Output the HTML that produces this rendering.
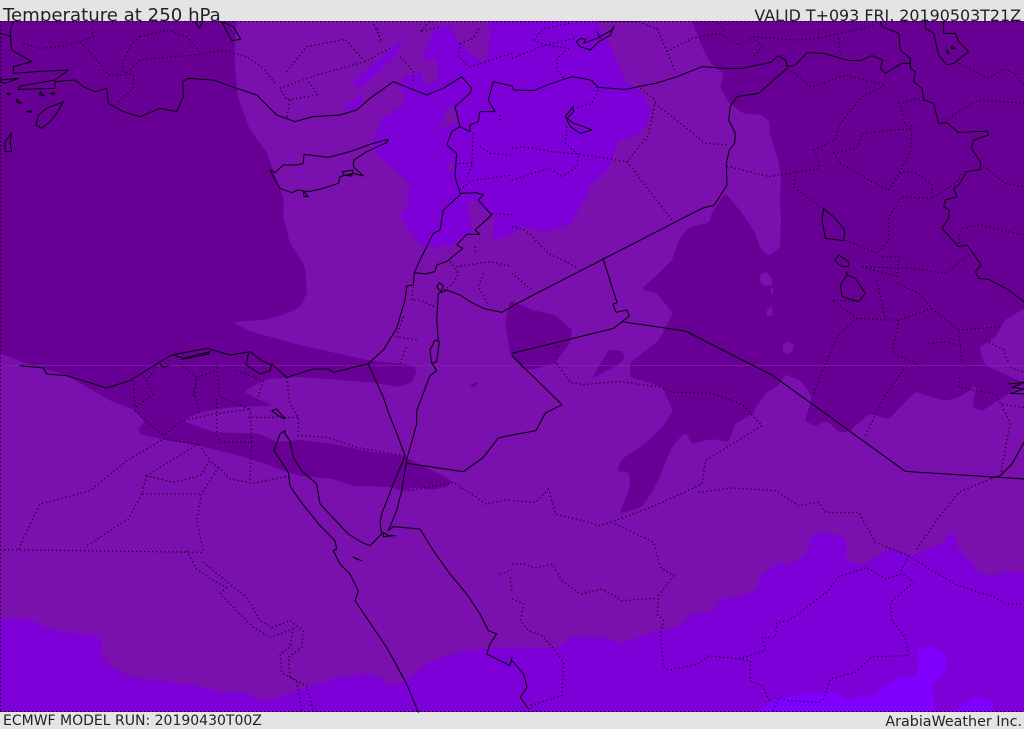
<!DOCTYPE html>
<html><head><meta charset="utf-8"><title>Temperature at 250 hPa</title>
<style>
html,body{margin:0;padding:0;background:#e4e4e4;width:1024px;height:729px;overflow:hidden}
svg{position:absolute;left:0;top:0;display:block}
text{font-family:"DejaVu Sans","Liberation Sans",sans-serif;fill:#222}
.l path{fill:none;stroke:#000;stroke-width:1;stroke-linejoin:round;stroke-linecap:round;vector-effect:non-scaling-stroke}
.d path{fill:none;stroke:#000;stroke-width:1.1;stroke-dasharray:1.2 2.8;vector-effect:non-scaling-stroke}
.s{filter:url(#sm)}
</style></head><body>
<svg width="1024" height="729" viewBox="0 0 1024 729" xmlns="http://www.w3.org/2000/svg">
<defs>
<clipPath id="map"><rect y="21" width="1024" height="691"/></clipPath>
<filter id="sm" filterUnits="userSpaceOnUse" x="-30" y="-10" width="1090" height="760" color-interpolation-filters="sRGB">
<feGaussianBlur stdDeviation="1.8"/>
<feComponentTransfer><feFuncA type="linear" slope="6" intercept="-2.5"/></feComponentTransfer>
</filter>
</defs>
<rect width="1024" height="729" fill="#e4e4e4"/>
<text x="3" y="21" font-size="18.15">Temperature at 250 hPa</text>
<text x="1021" y="21" font-size="15.9" text-anchor="end">VALID T+093 FRI. 20190503T21Z</text>
<rect y="21" width="1024" height="691" fill="#7a10ae"/>
<g clip-path="url(#map)">
<!-- bright -->
<path class="s" fill="#7d00d9" d="M422 60 433 30 448 25 460 43 482 63 488 57 490 33 487 11 592 11 609 43 619 67 627 83 640 90 650 107 649 123 635 137 619 140 609 168 589 187 587 197 579 208 572 223 545 232 522 227 512 235 492 240 495 217 490 213 480 207 473 197 468 207 473 233 457 243 433 248 420 245 400 217 407 207 410 183 377 155 373 140 383 117 402 107 405 98 400 87 403 77 422 72 422 80 428 87 438 80 437 58Z"/>
<path fill="#7a10ae" d="M440 128 447 107 455 105 460 120 447 127Z"/>
<path fill="#7a10ae" d="M447 168 450 161 453 163 452 170 448 173Z"/>
<path fill="#7d00d9" d="M353 82 403 38 398 53 360 90Z M343 108 362 93 363 100 357 108 347 112Z"/>
<path class="s" fill="#7d00d9" d="M-10 619 27 619 57 631 98 636 103 644 100 654 113 669 133 677 200 686 217 692 247 692 263 701 280 697 307 687 333 679 367 673 377 676 390 685 403 682 427 664 450 654 480 649 512 647 559 648 572 637 599 637 622 643 635 639 652 632 672 629 685 622 692 613 712 613 722 599 742 597 759 587 760 576 777 563 792 564 807 554 810 537 822 532 845 536 847 547 845 557 855 565 865 564 889 549 904 552 912 556 945 542 949 532 957 536 957 547 979 572 992 576 1005 571 1034 572 1034 722 -10 722Z"/>
<path class="s" fill="#7f00ff" d="M745 722 775 699 805 694 832 691 845 697 850 703 855 697 872 696 899 677 915 676 920 664 917 651 932 646 947 657 945 671 932 686 935 722Z M938 722 964 704 975 696 992 701 996 722Z"/>
<!-- dark -->
<path class="s" fill="#680096" d="M-10 11 237 11 235 43 235 67 238 97 250 130 267 153 277 180 284 200 283 217 290 243 305 267 307 293 300 307 283 315 263 320 230 322 253 332 300 345 367 360 412 365 417 371 412 382 400 387 367 382 300 377 267 379 243 391 257 399 277 406 233 407 200 412 182 421 200 427 213 432 260 434 277 442 300 440 333 444 367 451 403 456 433 471 453 481 447 487 430 490 417 487 403 491 390 487 353 486 333 479 300 476 287 472 267 464 233 454 200 446 167 440 140 434 138 429 145 422 133 409 113 402 87 387 63 374 30 365 10 357 -10 349Z"/>
<path class="s" fill="#680096" d="M688 11 702 47 712 65 724 73 720 87 729 103 742 113 762 115 770 122 769 133 773 143 779 163 781 177 780 200 781 217 780 247 769 256 760 248 755 233 742 213 729 197 725 193 712 213 709 223 689 227 679 240 672 260 655 277 640 290 655 292 673 313 659 340 630 363 630 377 662 387 673 411 665 424 645 444 622 459 616 472 629 472 630 487 619 514 642 507 655 487 672 447 685 432 692 444 712 439 729 442 735 424 752 414 765 394 780 384 785 374 802 382 812 397 805 421 815 426 827 421 839 432 849 432 869 414 889 419 915 392 932 397 945 401 962 396 977 384 972 407 982 411 1019 387 1034 381 1019 381 989 367 984 363 979 347 995 338 1005 320 1034 303 1034 11Z"/>
<path fill="#7a10ae" d="M760 275 766 272 772 278 772 285 765 286 760 282Z M771 288 773 288 773 294 771 294Z M767 310 772 306 773 315 767 316Z M783 345 788 341 794 345 792 352 786 354 783 351Z"/>
<path class="s" fill="#680096" d="M510 300 532 310 555 315 572 330 570 343 555 363 537 369 522 369 510 353 505 323Z"/>
<path fill="#680096" d="M592 379 599 366 609 350 622 351 625 358 619 364 595 377Z M470 385 478 382 477 386 472 387Z"/>
</g>
<rect y="365" width="1024" height="1" fill="#8a2cb0" opacity=".55"/>
<g class="d"><path d="M0 21.5H1024M0 711.5H1024M.5 21V712"/></g>

<!-- Q1 -->
<g transform="scale(.33333)">
<g class="d"><path d="M70 130 120 145 180 140 240 125 280 110 275 80M240 125 290 180 325 225 375 225 420 180 520 170 590 165 670 150 740 170 790 205 825 250M420 110 500 90 560 110 600 155M420 110 395 130 365 195 370 215 400 225 400 265 350 310M860 215 920 140 1035 118 1095 185 1170 145M1095 185 950 225 840 265 860 300 950 285M925 245 955 285M870 300 860 355M1290 65 1260 95 1320 80M1130 85 1145 125 1120 70M1200 170 1240 215 1240 250M1380 130 1420 115 1440 80M1380 130 1375 170 1410 200 1536 160M1420 400 1415 500 1400 530M1440 440 1470 460 1536 465M1365 490 1420 490M1380 570 1410 545 1430 540 1536 525M1475 640 1536 645M1425 740 1425 760M1350 785 1375 820 1360 850 1320 880M1370 800 1470 785 1536 800M1450 820 1435 860 1465 915M1240 860 1235 900 1260 900 1315 925M1210 950 1190 1010 1250 1020M1200 1090 1220 1040M1500 345 1500 360"/></g>
<g class="l"><path d="M40 65 30 95 35 150 70 170 95 185 40 200 40 220 110 215 205 210 165 240 60 258 55 268 165 265 165 245 225 240 250 260 285 275 320 265 325 310 370 335 420 350 480 325 530 335 550 290 548 245 565 235 640 240 710 265 770 285 830 345 885 365 940 350 1020 345 1070 330 1110 295 1180 245 1280 285 1330 265 1385 230 1415 265 1410 280 1365 320 1380 380 1410 395 1410 375 1435 365 1440 335 1485 335 1465 300 1480 245 1536 258"/>
<path d="M1380 380 1355 395 1340 435 1370 460 1365 530 1380 580 1430 578 1450 585 1435 600 1475 645 1425 690 1440 703 1400 703 1370 735 1388 745 1340 785 1310 795 1305 815 1275 822 1243 818 1240 855 1220 858 1215 900 1190 985 1150 1050 1100 1095"/>
<path d="M1380 585 1330 630 1320 690 1300 700 1260 780 1243 818"/>
<path d="M1315 880 1340 870 1380 885 1410 905 1450 925 1505 937 1536 920M1315 880 1310 960 1315 1020M1310 860 1318 848 1330 858 1322 875 1310 860M1290 1050 1305 1020 1318 1025 1310 1085 1295 1090 1290 1050"/>
<path d="M810 510 825 518 850 495 890 495 910 490 912 463 985 472 1050 455 1120 430 1165 418 1160 428 1100 455 1062 480 1060 500 1090 528 1060 520 1020 530 1015 550 970 565 925 575 895 570 875 578 840 565 825 540 810 510M910 572 925 590 912 590 910 572M1028 515 1060 510 1055 528 1030 525 1028 515"/>
<path d="M190 305 140 325 115 345 108 375 125 385 150 365 170 340 190 305ZM35 398 15 425 15 455 35 455 30 425 35 398ZM20 280 32 280 28 285 20 280ZM50 298 65 310 48 306ZM80 335 95 333 92 338 80 335ZM120 275 135 288 120 285ZM150 280 165 278 160 284ZM0 240 55 235 15 250 0 245M0 100 30 108M665 65 695 122 722 118 700 80 665 65M585 65 598 85 608 65"/>
<path d="M465 1095 515 1065 620 1045 690 1065 750 1055 790 1085 815 1095M520 1065 550 1075 630 1055 625 1062 545 1078M745 1060 740 1090"/></g>
</g>

<!-- Q2 -->
<g transform="translate(512,0) scale(.33333)">
<g class="d"><path d="M0 175 100 135 190 115M65 120 95 85 175 70M65 120 100 135 170 145M170 145 135 175 135 210 160 240M240 240 258 270 240 310 190 325M165 380 160 430 200 465 195 500 150 530M0 540 110 505 150 530M0 445 30 440 120 455 200 462 345 485 410 405 430 300 385 265M430 310 580 430 650 435M345 485 480 660M645 498 770 530 925 505M850 515 845 560 910 610 935 625M905 450 970 420 985 370 1050 290 1120 255 1000 225 900 262 830 205M905 450 920 480 920 505M965 460 1040 440 1050 400 1200 385 1195 460 1130 570 1070 540 985 490 965 460M1160 310 1230 295M1165 320 1180 375 1220 380M1130 570 1170 515 1215 520 1260 555 1260 595 1330 550 1360 510M1405 490 1480 550 1536 560M1260 595 1170 590 1130 650 1130 720 1095 760 1000 720M1350 685 1400 675 1536 705M1340 730 1345 690M1370 765 1300 820 1200 805 1050 800M1110 770 1160 770 1155 830 1050 800M1155 850 1220 880 1260 925 1340 990 1350 1090M1340 990 1470 980M1260 925 1160 960 1120 960 1095 840M1120 960 1035 955 960 900 1040 905M1035 955 975 1010 940 1095M1160 960 1140 1060 1225 1095M1250 1030 1300 1025 1350 1040M1420 1020 1475 1050 1490 1090M465 155 540 115 620 100 680 135 725 110 850 120 920 115 1090 75M920 115 920 85M435 85 465 155 490 215M725 110 750 140 720 175M980 115 985 170M260 65 380 65 440 90M620 70 640 95M1310 355 1400 300 1536 310M0 680 40 690 110 760 200 805M0 820 60 870M140 1040 130 1095M1340 190 1430 235 1475 208 1510 220 1536 260"/></g>
<g class="l"><path d="M0 258 5 270 65 272 110 253 180 230 235 240 260 262 340 268 430 250 490 232 570 200 640 205 690 205 775 187 800 167 822 182 825 200 850 195 885 158 935 160 1010 182 1045 182 1080 167 1112 180 1105 205 1120 220 1170 190 1195 190"/>
<path d="M1105 65 1110 80 1160 100 1165 150 1195 175 1195 205 1210 215 1205 245 1230 265 1235 300 1265 310 1280 370 1305 368 1340 398 1425 393 1430 405 1385 420 1378 445 1405 485 1405 508 1365 515 1340 555 1325 565 1335 590 1300 600 1295 620 1312 630 1310 655 1290 685 1340 740 1365 735 1408 795 1390 815 1400 835 1430 838 1490 870 1536 905"/>
<path d="M825 205 740 280 675 290 655 318 650 360 670 400 668 430 652 450 643 490 645 555 607 615 570 625 0 918"/>
<path d="M273 775 315 908 303 912 312 937 345 930 352 948 305 985 0 1060M330 965 520 993 720 1095M0 1068 30 1095"/>
<path stroke-width=".8" d="M1240 65 1240 85 1265 100 1280 165 1305 195 1325 190 1370 155 1340 125 1330 100 1295 100 1295 65M1305 150 1312 162 1305 160ZM1320 138 1330 146 1318 146Z"/>
<path d="M193 125 205 115 220 118 215 130 255 115 300 90 305 80 295 105 260 125 235 150 205 140 193 125ZM255 95 265 115M183 320 160 350 175 380 205 400 240 390 215 380 185 370 165 355 185 335Z"/>
<path d="M935 625 930 660 940 715 995 722 998 690 965 650 945 635 935 625ZM968 782 980 765 1010 785 1010 800 990 800 968 782ZM1003 815 1005 825 985 855 990 890 1040 905 1060 880 1030 835 1005 825Z"/></g>
</g>

<!-- Q3 -->
<g transform="translate(0,364) scale(.33333)">
<g class="d"><path d="M400 50 405 130 460 90 440 50 470 10M405 140 490 215 545 170 640 150 750 135 660 100 650 0M580 95 590 40 650 20M540 0 590 40 585 95 600 150M710 20 790 50M650 105 650 210 660 235 755 235 750 130M755 235 750 355M860 40 870 120 895 160 895 215 980 220 1070 250 1210 275M745 160 895 160M790 50 770 110M55 555 120 420 270 380 380 290 490 225 595 240 630 290M595 240 440 335 520 355 600 335 630 290 655 310 605 390 590 470 610 560M440 335 425 390 600 390M425 390 385 465 260 545M655 310 690 345 760 358 870 335M0 557 610 565M560 560 590 615 640 650 680 670 660 690 760 790 810 820 880 795 870 850 840 870 845 925 890 950 905 1040M610 595 690 660 740 700 780 770 815 790 870 770 910 800 905 850 865 880 870 940 920 965 940 1040M1225 380 1360 355 1430 400 1455 420 1536 405M1500 630 1536 618M1536 680 1530 640"/></g>
<g class="l"><path d="M60 5 130 12 140 30 200 35 320 72 390 50 470 0M480 0 490 10 505 5M735 0 780 30 810 20 815 0 860 40 940 15 985 15 1000 25 1100 0"/>
<path d="M1105 0 1150 100 1165 145 1195 220 1215 275M1298 0 1310 20 1290 35 1250 140 1250 180 1225 270"/>
<path d="M1215 275 1180 360 1145 450 1140 475 1145 510 1110 545 1085 535 1045 510 960 420 950 360 905 320 880 280 870 230 855 210 855 200 840 210 822 260 865 325 870 365 900 410 960 485 1005 530 1010 555 1000 560 1020 600 1050 630 1075 680 1065 710 1160 850 1220 960 1255 1045"/>
<path d="M1222 275 1205 380 1190 440 1165 500 1180 488 1260 495 1300 560 1350 630 1400 690 1440 750 1465 800 1490 810 1470 840 1460 870 1530 905 1536 880"/>
<path d="M1222 298 1390 323 1450 280 1495 222 1536 213"/>
<path d="M815 140 830 135 855 165 835 155ZM1060 580 1085 590 1070 585ZM1150 505 1165 515 1185 515 1150 518Z"/></g>
</g>

<!-- Q4 -->
<g transform="translate(512,364) scale(.33333)">
<g class="d"><path d="M135 0 175 55 215 62 320 52 450 70 480 85 600 88 690 120 750 185 580 290 570 360 440 420 310 470 265 485 210 470 130 450 110 375 70 415 0 410M560 385 660 372 790 380 860 425 920 415 940 445 1040 445 1090 535 1190 575 1260 620 1340 665 1450 700 1480 720 1536 720M310 480 425 535 445 610 485 635 440 695 435 750 455 770 445 810 455 910 470 918 560 900 590 875 680 885 760 860 750 820 790 820 795 775 830 770 950 680 975 640 1065 610 1120 645 1170 630 1205 655 1135 715 1140 770 1180 820 1190 875 1080 878 1030 925 955 945 935 1005 920 1015 830 1010 800 1000 780 1045M1190 575 1165 625M1215 555 1280 460 1340 385 1435 345M1465 335 1495 175 1450 90 1340 70 1345 25M1060 215 1115 100 1180 10M905 90 940 0M0 600 35 600 70 612 120 600 150 650 205 690 270 675 330 710 430 703M0 705 35 720 25 770 50 800 90 815 130 860 155 895 150 995 55 1025 60 1040M680 885 715 890 715 950 750 965 775 1015M1535 130 1465 120M1495 10 1536 25"/></g>
<g class="l"><path d="M0 213 72 200 100 147 150 122 25 0M715 0 780 33 1180 322 1536 345M1536 235 1500 300 1465 335 1435 342"/>
<path stroke-width=".8" d="M0 890 35 930 45 970 25 1000 50 1035M1490 60 1536 55 1500 70 1536 75 1495 88 1536 90"/></g>
</g>

<text x="3" y="725" font-size="14">ECMWF MODEL RUN: 20190430T00Z</text>
<text x="1022" y="726" font-size="14.3" text-anchor="end">ArabiaWeather Inc.</text>
</svg>
</body></html>
